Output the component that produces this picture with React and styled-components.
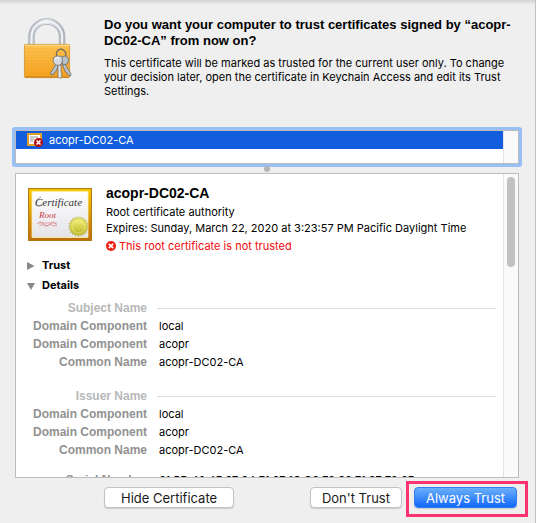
import React, { useState } from 'react'
import styled, { createGlobalStyle } from 'styled-components'

const GlobalStyle = createGlobalStyle`
  * {
    box-sizing: border-box;
  }

  body {
    margin: 0;
    background: #c0c0c0;
    font-family: Inter, "Liberation Sans", sans-serif;
    font-size: 11px;
    color: #000;
  }
`

const Sheet = styled.main`
  display: flex;
  flex-direction: column;
  height: 100vh;
  margin-right: 1px;
  padding: 17px 14px 0 13px;
  overflow: hidden;
  background: linear-gradient(#d2d2d2, #efefef 5px);
`

const Header = styled.header`
  display: flex;
  gap: 32px;
  min-height: 111px;
  padding-left: 9px;
`

const LockIcon = styled.svg`
  flex: none;
  width: 50px;
  height: 64px;
`

const Message = styled.div`
  flex: 1;
`

const Question = styled.h1`
  margin: 0 0 7px;
  font-family: "Liberation Sans", sans-serif;
  font-size: 13px;
  line-height: 16px;
`

const Explanation = styled.p`
  margin: 0;
  line-height: 14px;
`

const CertificateList = styled.div`
  display: flex;
  flex: none;
  height: 34px;
  margin: 2px;
  border: 1px solid #bcbcbc;
  background: #fff;
  box-shadow: 0 0 0 3px #98bff6;
  border-radius: 1px;
`

const ListRows = styled.div`
  flex: 1;
`

const ListRow = styled.button`
  display: flex;
  align-items: center;
  gap: 6px;
  width: 100%;
  height: 18px;
  padding: 0 11px;
  border: 0;
  background: #125dde;
  color: #fff;
  font: inherit;
`

const Track = styled.div`
  flex: none;
  width: 15px;
  padding: 3px 2px;
  border-left: 1px solid #e4e4e4;
  background: #fafafa;
`

const Thumb = styled.div`
  width: 8px;
  height: 90px;
  margin: 0 auto;
  border-radius: 4px;
  background: #c1c1c1;
`

const Splitter = styled.div`
  flex: none;
  width: 6px;
  height: 6px;
  margin: 0 auto;
  border-radius: 3px;
  background: #b4b4b4;
`

const Panel = styled.section`
  display: flex;
  flex: 1;
  min-height: 0;
  margin: 1px 2px 0;
  border: 1px solid #bcbcbc;
  background: #fff;
`

const PanelBody = styled.div`
  flex: 1;
  padding: 10px 7px 0 11px;
  overflow-y: auto;
  scrollbar-width: none;
`

const Summary = styled.div`
  display: flex;
  gap: 13px;
  padding: 0 0 1px 1px;
`

const CertificateIcon = styled.svg`
  flex: none;
  width: 65px;
  height: 54px;
  margin-top: 4px;
`

const Name = styled.h2`
  margin: 0 0 2px;
  font-family: "Liberation Sans", sans-serif;
  font-size: 14px;
  line-height: 18px;
`

const Line = styled.p`
  display: flex;
  align-items: center;
  gap: 3px;
  margin: 0;
  line-height: 16px;
`

const Alert = styled(Line)`
  margin-top: 2px;
  color: #f50a0a;
`

const Disclosure = styled.button`
  display: flex;
  align-items: center;
  gap: 7px;
  height: 20px;
  padding: 0;
  border: 0;
  background: none;
  font: bold 11px Inter, "Liberation Sans", sans-serif;
`

const Fields = styled.dl`
  display: grid;
  grid-template-columns: 120px 1fr;
  column-gap: 12px;
  grid-auto-rows: 18px;
  align-items: center;
  margin: ${({ $tight }) => ($tight ? '12px' : '16px')} 0 0;

  button + & {
    margin-top: 4px;
  }
`

const Label = styled.dt`
  font: bold 12px "Liberation Sans", sans-serif;
  text-align: right;
  color: ${({ $heading }) => ($heading ? '#b8b8b8' : '#919191')};
`

const Value = styled.dd`
  margin: 0;
  white-space: nowrap;
`

const Rule = styled.dd`
  height: 1px;
  margin: 0 0 0 -2px;
  background: #dedede;
`

const Footer = styled.footer`
  display: flex;
  flex: none;
  gap: 12px;
  height: 45px;
  padding: 9px 4px 0 91px;
`

const PushButton = styled.button`
  height: 21px;
  padding: 0 ${({ $wide }) => ($wide ? '16px' : '11px')};
  border: 1px solid ${({ $primary }) => ($primary ? '#2f7df0' : '#c2c2c2')};
  border-radius: 4px;
  background: ${({ $primary }) => ($primary ? 'linear-gradient(#6bb0fa, #1268fb)' : '#fff')};
  box-shadow: 0 1px 1px rgba(0, 0, 0, 0.15);
  color: ${({ $primary }) => ($primary ? '#fff' : '#1a1a1a')};
  font: 13px Inter, "Liberation Sans", sans-serif;
  line-height: 18px;
`

const Spacer = styled.div`
  flex: 1;
`

const Highlight = styled.div`
  position: relative;
  height: 21px;

  &::after {
    content: '';
    position: absolute;
    inset: -6px -11px -9px -8px;
    border: 3px solid #fb3370;
    pointer-events: none;
  }
`

const Lock = () => (
  <LockIcon viewBox="-1 -1 50 64" aria-hidden="true">
    <defs>
      <linearGradient id="body" x1="0" y1="0" x2="0" y2="1">
        <stop offset="0" stopColor="#fdc452" />
        <stop offset="1" stopColor="#f5a11d" />
      </linearGradient>
      <linearGradient id="shackle" x1="0" y1="0" x2="1" y2="0">
        <stop offset="0" stopColor="#b9bdc5" />
        <stop offset="0.5" stopColor="#e6e9ee" />
        <stop offset="1" stopColor="#b4b8c0" />
      </linearGradient>
    </defs>
    <path d="M8.500 28V18.500a15.300 15 0 0 1 30.600 0V28" fill="none" stroke="#abafb7" strokeWidth="6.500" />
    <path d="M8.500 28V18.500a15.300 15 0 0 1 30.600 0V28" fill="none" stroke="url(#shackle)" strokeWidth="5.200" />
    <path d="M8.500 28V18.500a15.300 15 0 0 1 30.600 0V28" fill="none" stroke="#f4f5f8" strokeWidth="2" />
    <rect x="1.400" y="26.400" width="45.200" height="33.200" rx="1.200" fill="url(#body)" stroke="#d2902c" strokeWidth="0.800" />
    <path d="M2 27.300h44" stroke="#ffe09a" strokeWidth="1" />
    <path d="M2 31h44M2 34h44M2 37h44M2 40h44M2 43h44M2 46h44M2 49h44M2 52h44M2 55h44" stroke="#eb9f28" strokeWidth="0.500" opacity="0.500" />
    <path d="M2 59h44" stroke="#c07a1a" strokeWidth="1" />
    <path d="M33.500 38c-1.500-9 10-9 9.500 0" fill="none" stroke="#6f6c62" strokeWidth="1.300" />
    <g stroke="#5f6366" strokeWidth="0.700" fill="#bac0c4">
      <path d="M41.500 45l6.500 11-.5 2-2.500-1-1-2-1.500-1-3.500-8z" />
      <path d="M33 46l-5.500 9 .5 2 2.500-.5 1-2 1.500-1 2.500-6z" />
      <path d="M35 47v11.500l2 2 1.800-1.800-.8-1.500 1-1.500-1-1.500V47z" fill="#e6e9eb" />
      <path d="M38 39.500q4-3 7 0 2 3-1 6.500l-4 1z" />
      <path d="M30.500 39.500q4-3 8.500-.5 1.500 4-1 7.500-3 2-6 0-3-3-1.500-7z" fill="#d5dbde" />
    </g>
    <path d="M32 40.500q2.500-1.500 5-.5" stroke="#fff" fill="none" />
  </LockIcon>
)

const sealPoints = Array.from({ length: 40 }, (_, i) => {
  const r = i % 2 ? 8 : 10
  const a = (i * Math.PI) / 20
  return `${50.5 + r * Math.cos(a)},${38.5 + r * Math.sin(a)}`
}).join(' ')

const Certificate = () => (
  <CertificateIcon viewBox="0 0 65 54" aria-hidden="true">
    <defs>
      <linearGradient id="frame" x1="0" y1="0" x2="0" y2="1">
        <stop offset="0" stopColor="#f6c800" />
        <stop offset="1" stopColor="#bf6c0c" />
      </linearGradient>
      <linearGradient id="paper" x1="0" y1="0" x2="0" y2="1">
        <stop offset="0" stopColor="#fff" />
        <stop offset="1" stopColor="#e4e4e8" />
      </linearGradient>
      <linearGradient id="seal" x1="0" y1="0" x2="0" y2="1">
        <stop offset="0" stopColor="#f0ee78" />
        <stop offset="1" stopColor="#bfb92c" />
      </linearGradient>
    </defs>
    <rect x="0.500" y="0.500" width="63" height="52" fill="url(#frame)" stroke="#b07a10" />
    <rect x="4" y="3.500" width="56" height="46" fill="url(#paper)" stroke="#fff0a8" strokeWidth="0.800" />
    <text x="7" y="18" fontFamily="Liberation Serif, serif" fontStyle="italic" fontSize="11" fill="#333">Certificate</text>
    <path d="M13 9q-6 2-5 8 3 3 7-1" fill="none" stroke="#555" strokeWidth="0.500" />
    <text x="11" y="30" fontFamily="Liberation Serif, serif" fontStyle="italic" fontSize="9" fill="#c9383e">Root</text>
    <path d="M9 36q4-4 7 0t6 0 6 0q2 2-2 2-4-3-8 0-3-3-7 0M11 35h18" fill="none" stroke="#d98084" strokeWidth="0.700" />
    <polygon points={sealPoints} fill="url(#seal)" stroke="#aaa52b" strokeWidth="0.500" />
    <circle cx="50.500" cy="38.500" r="6.500" fill="url(#seal)" stroke="#efed8c" strokeWidth="0.600" />
  </CertificateIcon>
)

const SmallCertificate = () => (
  <svg width="16" height="16" viewBox="0 0 16 16" aria-hidden="true">
    <rect x="1" y="2" width="13" height="11" fill="#fff" stroke="#dfa02a" strokeWidth="2" />
    <path d="M3 5h8M3 7h4M3 9h3" stroke="#999" strokeWidth="1" />
    <circle cx="11.500" cy="10.500" r="4.500" fill="#b50d12" />
    <path d="M9.500 8.500l4 4M13.500 8.500l-4 4" stroke="#fff" strokeWidth="1.500" />
  </svg>
)

const ErrorMark = () => (
  <svg width="10" height="10" viewBox="0 0 10 10" aria-hidden="true">
    <circle cx="5" cy="5" r="5" fill="#ee1c0c" />
    <path d="M2.800 2.800l4.400 4.400M7.200 2.800l-4.400 4.400" stroke="#fff" strokeWidth="1.700" />
  </svg>
)

const Arrow = ({ open }) => (
  <svg width="8" height="9" viewBox="0 0 8 9" aria-hidden="true">
    <path d={open ? 'M0 2h8l-4 7z' : 'M0 1l7.500 4-7.500 4z'} fill="#888" />
  </svg>
)

const names = [
  ['Domain Component', 'local'],
  ['Domain Component', 'acopr'],
  ['Common Name', 'acopr-DC02-CA'],
]

const FieldGroup = ({ title, rows }) => (
  <Fields $tight={!title}>
    {title && <Label $heading>{title}</Label>}
    {title && <Rule />}
    {rows.map(([label, value], i) => (
      <React.Fragment key={i}>
        <Label>{label}</Label>
        <Value>{value}</Value>
      </React.Fragment>
    ))}
  </Fields>
)

const App = () => {
  const [trustOpen, setTrustOpen] = useState(false)
  const [detailsOpen, setDetailsOpen] = useState(true)

  return (
    <>
      <GlobalStyle />
      <Sheet>
        <Header>
          <Lock />
          <Message>
            <Question>
              Do you want your computer to trust certificates signed by “acopr-DC02-CA” from now on?
            </Question>
            <Explanation>
              This certificate will be marked as trusted for the current user only. To change
              your decision later, open the certificate in Keychain Access and edit its Trust Settings.
            </Explanation>
          </Message>
        </Header>
        <CertificateList>
          <ListRows>
            <ListRow type="button">
              <SmallCertificate />
              acopr-DC02-CA
            </ListRow>
          </ListRows>
          <Track />
        </CertificateList>
        <Splitter />
        <Panel>
          <PanelBody>
            <Summary>
              <Certificate />
              <div>
                <Name>acopr-DC02-CA</Name>
                <Line>Root certificate authority</Line>
                <Line>Expires: Sunday, March 22, 2020 at 3:23:57 PM Pacific Daylight Time</Line>
                <Alert>
                  <ErrorMark />
                  This root certificate is not trusted
                </Alert>
              </div>
            </Summary>
            <Disclosure type="button" aria-expanded={trustOpen} onClick={() => setTrustOpen(!trustOpen)}>
              <Arrow open={trustOpen} />
              Trust
            </Disclosure>
            <Disclosure type="button" aria-expanded={detailsOpen} onClick={() => setDetailsOpen(!detailsOpen)}>
              <Arrow open={detailsOpen} />
              Details
            </Disclosure>
            {detailsOpen && (
              <>
                <FieldGroup title="Subject Name" rows={names} />
                <FieldGroup title="Issuer Name" rows={names} />
                <FieldGroup rows={[['Serial Number', '61 BD 42 4F 07 04 F1 07 1C C0 79 30 71 07 79 0F']]} />
              </>
            )}
          </PanelBody>
          <Track>
            <Thumb />
          </Track>
        </Panel>
        <Footer>
          <PushButton type="button" $wide>Hide Certificate</PushButton>
          <Spacer />
          <PushButton type="button">Don't Trust</PushButton>
          <Highlight>
            <PushButton type="button" $primary>Always Trust</PushButton>
          </Highlight>
        </Footer>
      </Sheet>
    </>
  )
}

export default App
